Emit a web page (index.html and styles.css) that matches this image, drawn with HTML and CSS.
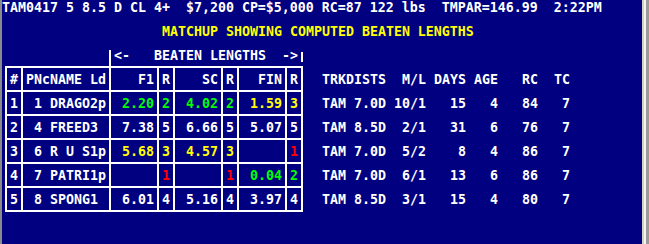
FILE: index.html
```html
<!DOCTYPE html>
<html>
<head>
<meta charset="utf-8">
<link rel="stylesheet" href="styles.css">
</head>
<body>
<div class="window">
  <div class="edge-left"></div>
  <main class="screen">
    <div class="line">TAM0417 5 8.5 D CL 4+  $7,200 CP=$5,000 RC=87 122 lbs  TMPAR=146.99  2:22PM</div>
    <div class="line"></div>
    <div class="line title">MATCHUP SHOWING COMPUTED BEATEN LENGTHS</div>
    <div class="line"></div>
    <div class="line span-row"><span class="bar bar-l"></span><span class="span-text">&lt;-   BEATEN LENGTHS  -&gt;</span><span class="bar bar-r"></span></div>
    <div class="body">
      <div class="grid">
        <div class="c">#</div><div class="c">PNcNAME Ld</div><div class="c">   F1</div><div class="c">R</div><div class="c">   SC</div><div class="c">R</div><div class="c">  FIN</div><div class="c">R</div>

        <div class="c">1</div><div class="c"> 1 DRAGO2p</div><div class="c g"> 2.20</div><div class="c g">2</div><div class="c g"> 4.02</div><div class="c g">2</div><div class="c y"> 1.59</div><div class="c y">3</div>

        <div class="c">2</div><div class="c"> 4 FREED3</div><div class="c"> 7.38</div><div class="c">5</div><div class="c"> 6.66</div><div class="c">5</div><div class="c"> 5.07</div><div class="c">5</div>

        <div class="c">3</div><div class="c"> 6 R U S1p</div><div class="c y"> 5.68</div><div class="c y">3</div><div class="c y"> 4.57</div><div class="c y">3</div><div class="c"></div><div class="c r">1</div>

        <div class="c">4</div><div class="c"> 7 PATRI1p</div><div class="c"></div><div class="c r">1</div><div class="c"></div><div class="c r">1</div><div class="c g"> 0.04</div><div class="c g">2</div>

        <div class="c">5</div><div class="c"> 8 SPONG1</div><div class="c"> 6.01</div><div class="c">4</div><div class="c"> 5.16</div><div class="c">4</div><div class="c"> 3.97</div><div class="c">4</div>
      </div>
      <div class="info">
        <div class="row">TRKDISTS  M/L DAYS AGE   RC  TC</div>
        <div class="row">TAM 7.0D 10/1   15   4   84   7</div>
        <div class="row">TAM 8.5D  2/1   31   6   76   7</div>
        <div class="row">TAM 7.0D  5/2    8   4   86   7</div>
        <div class="row">TAM 7.0D  6/1   13   6   86   7</div>
        <div class="row">TAM 8.5D  3/1   15   4   80   7</div>
      </div>
    </div>
  </main>
  <div class="edge-right"><i class="e1"></i><i class="e2"></i><i class="e3"></i></div>
</div>
</body>
</html>
```
FILE: styles.css
```css
html, body {
  margin: 0;
  padding: 0;
  background: #000080;
}
.window {
  display: flex;
  width: 649px;
  height: 244px;
  background: #000080;
  overflow: hidden;
}
.edge-left {
  width: 2px;
  flex: none;
  background: #8a8a8a;
}
.screen {
  width: 640px;
  flex: none;
  color: #ffffff;
  font-family: "DejaVu Sans Mono", monospace;
  font-weight: bold;
  font-size: 13.29px;
}
.line {
  height: 12px;
  line-height: 16px;
  white-space: pre;
}
.title {
  padding-left: 160px;
  color: #ffff00;
}
.span-row {
  display: flex;
  align-items: flex-start;
}
.bar {
  flex: none;
  width: 2px;
  background: #ffffff;
}
.bar-l {
  margin-left: 107px;
  margin-top: 2px;
  height: 16px;
}
.span-text {
  margin-left: 3px;
  margin-right: 3px;
  white-space: pre;
}
.bar-r {
  margin-top: 4px;
  height: 10px;
}
.body {
  display: flex;
  align-items: flex-start;
  margin-top: 6px;
}
.grid {
  margin-left: 3px;
  display: grid;
  grid-template-columns: 14px 86px 46px 14px 46px 14px 46px 14px;
  grid-auto-rows: 22px;
  gap: 2px;
  padding: 2px;
  background: #ffffff;
}
.c {
  background: #000080;
  padding-left: 3px;
  line-height: 24px;
  white-space: pre;
  overflow: visible;
}
.g { color: #00ff00; }
.y { color: #ffff00; }
.r { color: #ff0000; }
.info {
  margin-left: 19px;
  padding-top: 2px;
}
.row {
  height: 24px;
  line-height: 24px;
  white-space: pre;
}
.edge-right {
  flex: 1;
  display: flex;
}
.edge-right i {
  display: block;
  height: 100%;
}
.e1 { width: 2px; background: #d4d0c8; }
.e2 { width: 2px; background: #f4f2ea; }
.e3 { flex: 1; background: #9a9a9a; }
```
